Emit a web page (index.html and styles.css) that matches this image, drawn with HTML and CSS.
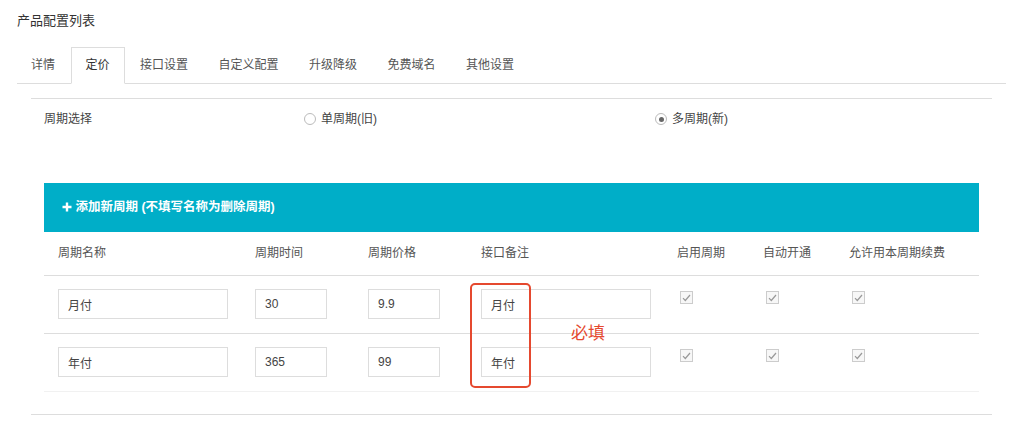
FILE: index.html
```html
<!DOCTYPE html>
<html lang="zh-CN">
<head>
    <meta charset="UTF-8">
    <title>产品配置列表</title>
    <link rel="stylesheet" href="styles.css">
</head>
<body>
<div class="page">
    <div class="title">产品配置列表</div>

    <!-- Tabs -->
    <ul class="tabs">
        <li>详情</li>
        <li class="active">定价</li>
        <li>接口设置</li>
        <li>自定义配置</li>
        <li>升级降级</li>
        <li>免费域名</li>
        <li>其他设置</li>
    </ul>

    <div class="panel">
        <div class="period-row">
            <span>周期选择</span>
            <label class="radio-opt"><span class="radio"></span>单周期(旧)</label>
            <label class="radio-opt"><span class="radio checked"></span>多周期(新)</label>
        </div>

        <div class="add-bar">
            <svg class="plus" width="10" height="10" viewBox="0 0 10 10"><path d="M5 0.5v9M0.5 5h9" stroke="#fff" stroke-width="2.4"/></svg>
            添加新周期 (不填写名称为删除周期)
        </div>

        <div class="grid head">
            <div>周期名称</div>
            <div>周期时间</div>
            <div>周期价格</div>
            <div>接口备注</div>
            <div>启用周期</div>
            <div>自动开通</div>
            <div>允许用本周期续费</div>
        </div>

        <div class="grid row">
            <div><input class="inp wide" value="月付"></div>
            <div><input class="inp short" value="30"></div>
            <div><input class="inp short" value="9.9"></div>
            <div><input class="inp wide" value="月付"></div>
            <div><span class="check"><svg width="9" height="8" viewBox="0 0 9 8"><path d="M1 4.2l2.3 2.3L8 1" fill="none" stroke="#999" stroke-width="1.2"/></svg></span></div>
            <div><span class="check"><svg width="9" height="8" viewBox="0 0 9 8"><path d="M1 4.2l2.3 2.3L8 1" fill="none" stroke="#999" stroke-width="1.2"/></svg></span></div>
            <div><span class="check"><svg width="9" height="8" viewBox="0 0 9 8"><path d="M1 4.2l2.3 2.3L8 1" fill="none" stroke="#999" stroke-width="1.2"/></svg></span></div>
        </div>

        <div class="grid row last">
            <div><input class="inp wide" value="年付"></div>
            <div><input class="inp short" value="365"></div>
            <div><input class="inp short" value="99"></div>
            <div><input class="inp wide" value="年付"></div>
            <div><span class="check"><svg width="9" height="8" viewBox="0 0 9 8"><path d="M1 4.2l2.3 2.3L8 1" fill="none" stroke="#999" stroke-width="1.2"/></svg></span></div>
            <div><span class="check"><svg width="9" height="8" viewBox="0 0 9 8"><path d="M1 4.2l2.3 2.3L8 1" fill="none" stroke="#999" stroke-width="1.2"/></svg></span></div>
            <div><span class="check"><svg width="9" height="8" viewBox="0 0 9 8"><path d="M1 4.2l2.3 2.3L8 1" fill="none" stroke="#999" stroke-width="1.2"/></svg></span></div>
        </div>
    </div>

    <!-- annotation -->
    <div class="mark-box"></div>
    <div class="mark-text">必填</div>
</div>
</body>
</html>
```

FILE: styles.css
```css
body {
    margin: 0;
    font-family: "Liberation Sans", "Noto Sans CJK SC", sans-serif;
    font-size: 12px;
    color: #555;
    background-color: #fff;
}

.page {
    position: relative;
    padding: 12px 12px 0 17px;
}

.title {
    font-size: 13px;
    line-height: 18px;
    color: #333;
}

.tabs {
    display: flex;
    list-style: none;
    margin: 17px 0 0 0;
    padding: 0;
    height: 36px;
    border-bottom: 1px solid #ddd;
}

.tabs li {
    padding: 0 14px;
    line-height: 35px;
    height: 35px;
    border: 1px solid transparent;
    margin-right: 0.5px;
    color: #555;
}

.tabs li:first-child {
    margin-left: -1px;
}

.tabs li.active {
    border-color: #ddd;
    border-bottom-color: #fff;
    background-color: #fff;
    color: #333;
}

.panel {
    margin: 14px 14px 0 14px;
    padding: 11px 13px 22px 13px;
    border-top: 1px solid #ddd;
    border-bottom: 1px solid #ddd;
}

.period-row {
    display: grid;
    grid-template-columns: 260px 351px 1fr;
    line-height: 18px;
    color: #444;
}

.radio-opt {
    display: flex;
    align-items: center;
}

.radio {
    width: 10px;
    height: 10px;
    border: 1px solid #bbb;
    border-radius: 50%;
    margin-right: 5px;
    position: relative;
}

.radio.checked::after {
    content: "";
    position: absolute;
    left: 2.5px;
    top: 2.5px;
    width: 5px;
    height: 5px;
    border-radius: 50%;
    background-color: #666;
}

.add-bar {
    margin-top: 55px;
    height: 49px;
    line-height: 49px;
    padding-left: 18px;
    background-color: #00aec8;
    color: #fff;
    font-size: 12.5px;
    font-weight: bold;
}

.plus {
    margin-right: 0;
    vertical-align: -1px;
}

.grid {
    display: grid;
    grid-template-columns: 197px 113px 113px 196px 86px 86px 1fr;
}

.grid > div {
    padding-left: 14px;
}

.head {
    height: 43px;
    line-height: 43px;
    border-bottom: 1px solid #ddd;
}

.row {
    height: 57px;
    border-bottom: 1px solid #ddd;
    align-items: start;
}

.row.last {
    border-bottom-color: #f1f1f1;
}

.inp {
    box-sizing: border-box;
    margin-top: 13px;
    height: 30px;
    padding: 0 9px;
    border: 1px solid #ddd;
    font-family: "Liberation Sans", "Noto Sans CJK SC", sans-serif;
    font-size: 12px;
    color: #444;
    outline: none;
}

.inp.wide {
    width: 170px;
}

.inp.short {
    width: 72px;
}

.check {
    display: flex;
    align-items: center;
    justify-content: center;
    box-sizing: border-box;
    width: 13px;
    height: 13px;
    margin: 15px 0 0 3px;
    border: 1px solid #ccc;
    background-color: #f7f7f7;
}

.mark-box {
    position: absolute;
    left: 470px;
    top: 283px;
    width: 57px;
    height: 101px;
    border: 2px solid #e5492f;
    border-radius: 5px;
}

.mark-text {
    position: absolute;
    left: 571px;
    top: 319px;
    font-size: 17px;
    color: #e5492f;
}
```
